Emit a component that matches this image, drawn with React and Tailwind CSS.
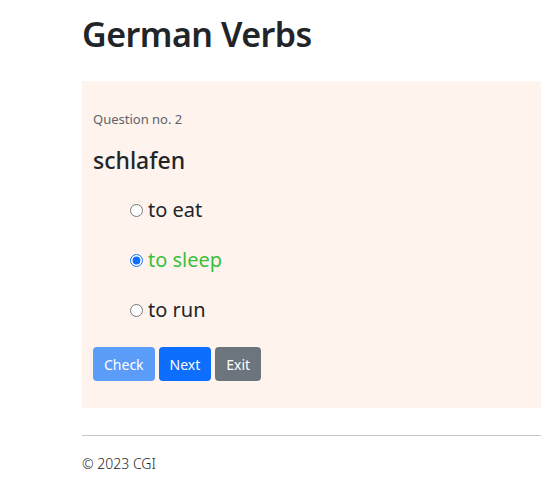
import React, { useState } from 'react';

const options = ['to eat', 'to sleep', 'to run'];

const App = () => {
  const [selected, setSelected] = useState('to sleep');

  return (
    <div
      className="min-h-screen bg-white pl-[82px] text-[#212529]"
      style={{ fontFamily: '"Noto Sans", "Open Sans", Arial, sans-serif' }}
    >
      <h1 className="pt-[10px] text-[34px] font-semibold leading-[48px] tracking-[-0.5px]">German Verbs</h1>

      <div className="mt-[23px] h-[327px] bg-[#fff3ee] px-[11px] pt-[28px]">
        <p className="text-[13px] leading-[20px] text-[#5c636a]">Question no. 2</p>
        <h2 className="mt-[14px] text-[23px] font-medium leading-[34px]">schlafen</h2>

        <div className="mt-[8px] flex flex-col pl-[37px]">
          {options.map(opt => (
            <label key={opt} className="flex h-[50px] items-center gap-[5px] text-[20px]">
              <input
                type="radio"
                name="answer"
                className="m-0 h-[13px] w-[13px] accent-[#0d6efd]"
                checked={selected === opt}
                onChange={() => setSelected(opt)}
              />
              <span className={opt === 'to sleep' ? 'text-[#3cbf3c]' : 'text-[#212529]'}>{opt}</span>
            </label>
          ))}
        </div>

        <div className="mt-[12px] flex gap-[4px]">
          <button className="h-[34px] rounded-[4px] bg-[#5c9cf9] px-[11px] text-[14px] text-white">Check</button>
          <button className="h-[34px] rounded-[4px] bg-[#0d6efd] px-[11px] text-[14px] text-white">Next</button>
          <button className="h-[34px] rounded-[4px] bg-[#6c757d] px-[11px] text-[14px] text-white">Exit</button>
        </div>
      </div>

      <hr className="mt-[27px] border-t border-[#c8c8c8]" />
      <p className="mt-[17px] text-[14px] font-light text-[#212529]">© 2023 CGI</p>
    </div>
  );
};

export default App;
